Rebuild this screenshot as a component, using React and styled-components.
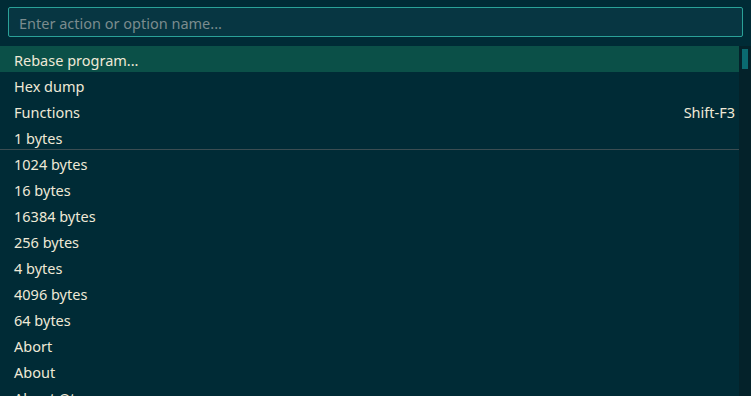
import React from "react";
import styled, { createGlobalStyle } from "styled-components";

const Global = createGlobalStyle`
  html, body { margin: 0; padding: 0; background: #002b36; overflow: hidden; }
  body { font-family: "Noto Sans", "Open Sans", sans-serif; }
`;

const Page = styled.div`
  width: 751px;
  height: 396px;
  background: #002b36;
  display: flex;
  flex-direction: column;
  overflow: hidden;
`;

const SearchBar = styled.div`
  padding: 7px 8px 9px 8px;
`;

const Input = styled.input`
  box-sizing: border-box;
  width: 100%;
  height: 30px;
  background: #073642;
  border: 1px solid #2aa198;
  border-radius: 2px;
  color: #eee8d5;
  font-family: "Noto Sans", sans-serif;
  font-size: 14.5px;
  padding: 1px 10px 0 10px;
  outline: none;
  &::placeholder { color: #7b8c8e; }
`;

const Body = styled.div`
  flex: 1;
  display: flex;
  min-height: 0;
`;

const List = styled.div`
  flex: 1;
  display: flex;
  flex-direction: column;
`;

const Row = styled.div`
  box-sizing: border-box;
  height: 26px;
  flex: 0 0 26px;
  display: flex;
  align-items: center;
  justify-content: space-between;
  padding: 2px 4px 0 14px;
  font-family: "Noto Sans", sans-serif;
  font-size: 14.5px;
  color: #efe9d7;
  background: ${(p) => (p.$active ? "#0b5048" : "transparent")};
  border-bottom: ${(p) => (p.$sep ? "1px solid #3b4d52" : "none")};
`;

const Shortcut = styled.span`
  color: #efe9d7;
`;

const Scrollbar = styled.div`
  width: 12px;
  background: #04222a;
  padding-top: 3px;
  display: flex;
  justify-content: center;
`;

const Thumb = styled.div`
  width: 6px;
  height: 20px;
  background: #0a6a70;
`;

const items = [
  { label: "Rebase program...", active: true },
  { label: "Hex dump" },
  { label: "Functions", shortcut: "Shift-F3" },
  { label: "1 bytes", sep: true },
  { label: "1024 bytes" },
  { label: "16 bytes" },
  { label: "16384 bytes" },
  { label: "256 bytes" },
  { label: "4 bytes" },
  { label: "4096 bytes" },
  { label: "64 bytes" },
  { label: "Abort" },
  { label: "About" },
  { label: "About Qt" },
];

export default function App() {
  return (
    <Page>
      <Global />
      <SearchBar>
        <Input placeholder="Enter action or option name..." />
      </SearchBar>
      <Body>
        <List>
          {items.map((it) => (
            <Row key={it.label} $active={it.active} $sep={it.sep}>
              <span>{it.label}</span>
              {it.shortcut && <Shortcut>{it.shortcut}</Shortcut>}
            </Row>
          ))}
        </List>
        <Scrollbar>
          <Thumb />
        </Scrollbar>
      </Body>
    </Page>
  );
}
